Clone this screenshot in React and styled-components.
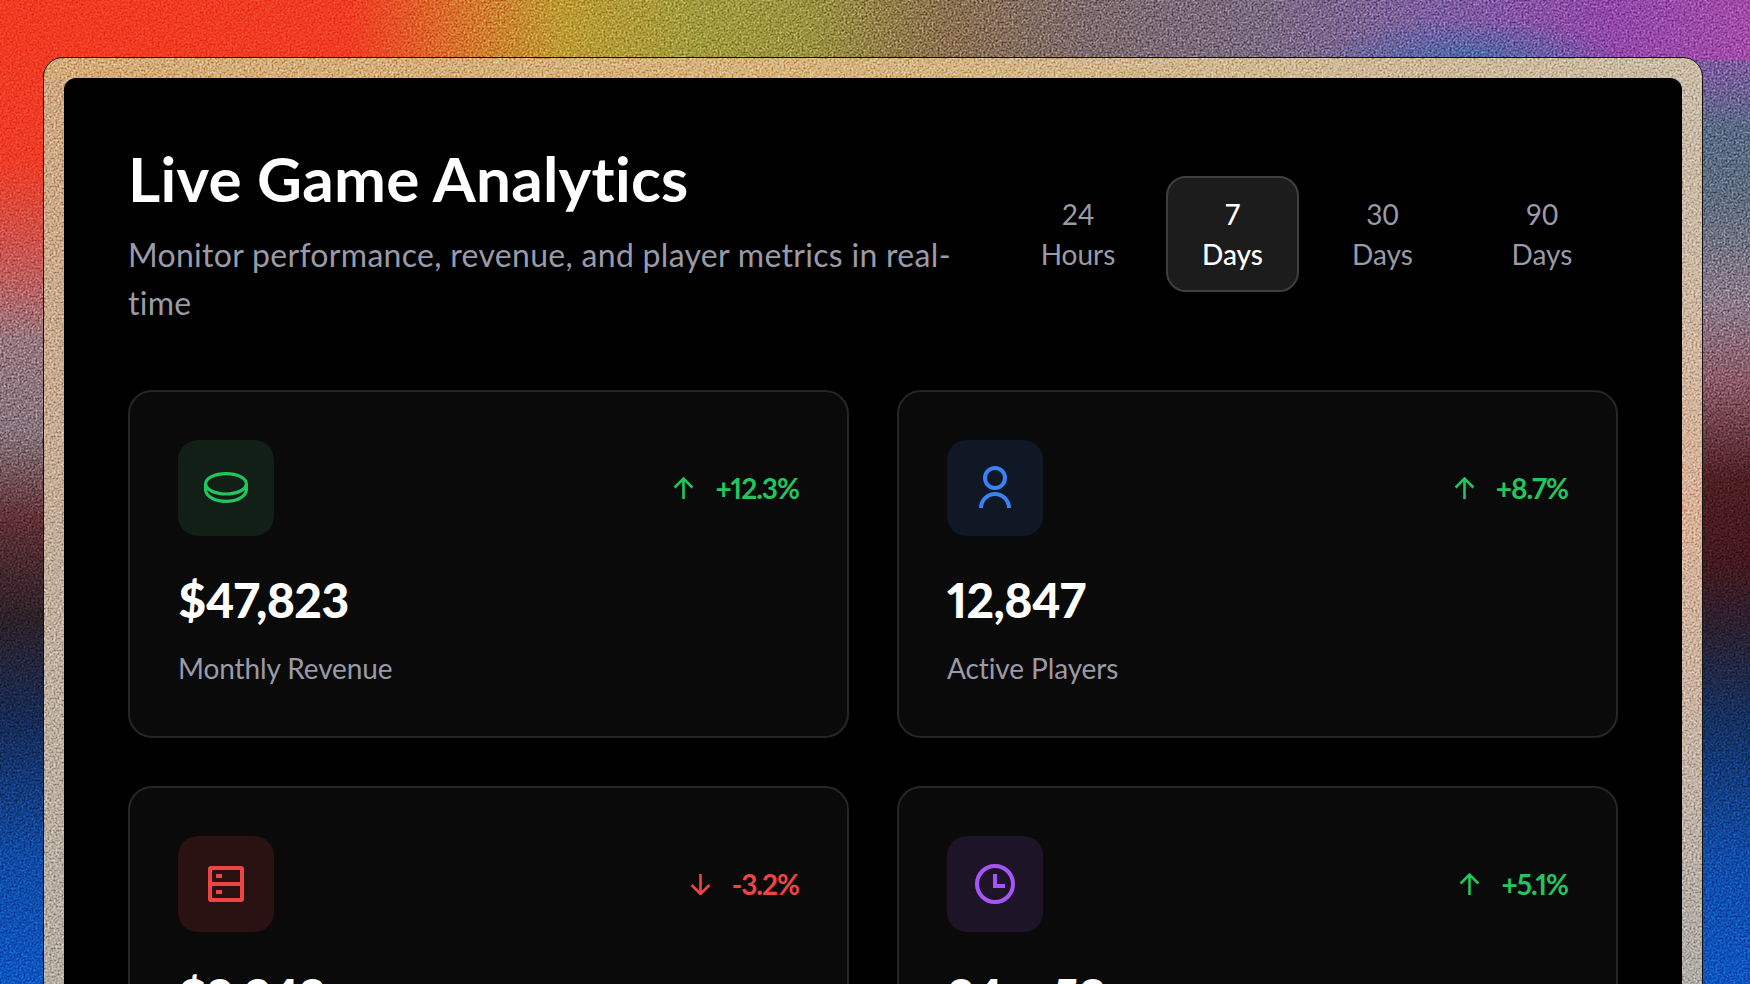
import React from 'react';
import styled, { createGlobalStyle } from 'styled-components';

const noise = `url("data:image/svg+xml,%3Csvg xmlns='http://www.w3.org/2000/svg' width='512' height='512'%3E%3Cfilter id='n' x='0' y='0' width='100%25' height='100%25' color-interpolation-filters='sRGB'%3E%3CfeTurbulence type='fractalNoise' baseFrequency='0.5' numOctaves='2' stitchTiles='stitch'/%3E%3CfeColorMatrix values='1.6 0.8 0.8 0 -1.1 1.6 0.8 0.8 0 -1.1 1.6 0.8 0.8 0 -1.1 0 0 0 0 1'/%3E%3C/filter%3E%3Crect width='512' height='512' filter='url(%23n)'/%3E%3C/svg%3E")`;

const GlobalStyle = createGlobalStyle`
  html, body {
    margin: 0;
    height: 100%;
    overflow: hidden;
    background: #000;
  }
  * {
    box-sizing: border-box;
  }
`;

// Grainy colour wash behind the frame: top band, left side, right side
const Page = styled.div`
  position: relative;
  height: 984px;
  overflow: hidden;
  padding: 57px 47px 0 43px;
  font-family: Lato, "Open Sans", sans-serif;
  font-variant-ligatures: none;
  background-repeat: no-repeat;
  background-image:
    radial-gradient(150px 40px at 1470px 58px, #4c68a4 0%, rgba(76, 104, 164, 0) 100%),
    linear-gradient(90deg, #f23a22 0%, #f03c24 20%, #d8702c 26%, #bd9a34 32%, #a09a3e 40%, #9a9240 46%, #8a7050 54%, #7c6a6c 62%, #7a6a80 72%, #7c5ea0 82%, #9048a8 92%, #a24ca8 100%),
    linear-gradient(180deg, #f03a22 0%, #ee3c26 160px, #c25a58 270px, #96767e 340px, #86747c 430px, #5e3034 520px, #2c2028 620px, #162a54 720px, #0f4aa4 860px, #0d55c0 984px),
    linear-gradient(180deg, #a04aa4 0%, #7a5c9c 70px, #586a84 130px, #5f6c7e 200px, #8a7a88 300px, #8a5a68 380px, #4c1e22 480px, #44181e 560px, #2a2030 630px, #143060 720px, #0f4ca8 860px, #0d55c0 984px);
  background-size: 100% 200px, 100% 60px, 50% 100%, 50% 100%;
  background-position: 0 0, 0 0, 0 0, 100% 0;

  &::before {
    content: '';
    position: absolute;
    inset: 0;
    background-image: ${noise};
    opacity: 0.45;
    mix-blend-mode: overlay;
    pointer-events: none;
  }
`;

const Frame = styled.div`
  position: relative;
  padding: 20px;
  border: 1px solid #111;
  border-radius: 20px;
  background-repeat: repeat, no-repeat, no-repeat, no-repeat;
  background-image:
    ${noise},
    linear-gradient(90deg, #d4ab78, #d6b37c 45%, #cabca6),
    linear-gradient(180deg, #d0a880, #c8ab90 300px, #bfb0a0 600px, #b6ada2 900px),
    linear-gradient(180deg, #c9bca6, #cbb9a4 200px, #d8b196 450px, #c6b4a4 680px, #b0aca8 900px);
  background-size: auto, 100% 22px, 50% 100%, 50% 100%;
  background-position: 0 0, 0 0, 0 0, 100% 0;
  background-blend-mode: soft-light, normal, normal, normal;
`;

const Panel = styled.main`
  background: #000;
  border-radius: 12px;
  padding: 64px;
`;

const Header = styled.header`
  display: flex;
  align-items: center;
  justify-content: space-between;
  gap: 32px;
  margin-bottom: 63px;
`;

const Intro = styled.div`
  width: 840px;
`;

const Title = styled.h1`
  margin: 0 0 17px;
  font-size: 62px;
  line-height: 72px;
  font-weight: 700;
  letter-spacing: 0.25px;
  color: #fff;
`;

const Subtitle = styled.p`
  margin: 0;
  font-size: 32px;
  line-height: 48px;
  letter-spacing: 0.3px;
  color: #9a9aa8;
`;

const Tabs = styled.nav`
  display: flex;
  gap: 16px;
  margin-bottom: 1px;
`;

const Tab = styled.button`
  width: ${(p) => p.$w}px;
  height: 116px;
  padding: 0;
  border-radius: 20px;
  border: 2px solid ${(p) => (p.$active ? '#3f3f42' : 'transparent')};
  background: ${(p) => (p.$active ? '#1c1c1c' : 'transparent')};
  color: ${(p) => (p.$active ? '#fff' : '#9a9aa8')};
  font-family: inherit;
  font-size: 28px;
  line-height: 40px;
  font-weight: ${(p) => (p.$active ? 500 : 400)};
`;

const Grid = styled.section`
  display: grid;
  grid-template-columns: 1fr 1fr;
  gap: 48px;
`;

const Card = styled.article`
  height: 348px;
  padding: 48px;
  border: 2px solid #262628;
  border-radius: 24px;
  background: #0a0a0a;
`;

const CardTop = styled.div`
  display: flex;
  align-items: center;
  justify-content: space-between;
  margin-bottom: 32px;
`;

const IconBox = styled.div`
  display: flex;
  align-items: center;
  justify-content: center;
  width: 96px;
  height: 96px;
  border-radius: 20px;
  background: ${(p) => p.$bg};
  color: ${(p) => p.$color};
`;

const Trend = styled.div`
  display: flex;
  align-items: center;
  gap: 21px;
  font-size: 28px;
  font-weight: 700;
  font-variant-numeric: proportional-nums;
  letter-spacing: -1px;
  color: ${(p) => (p.$down ? '#ef4444' : '#22c55e')};
`;

const Value = styled.div`
  font-size: 48px;
  line-height: 64px;
  font-weight: 900;
  font-variant-numeric: proportional-nums;
  letter-spacing: -0.6px;
  color: #fff;
  margin-bottom: 16px;
`;

const Label = styled.div`
  font-size: 28px;
  line-height: 40px;
  letter-spacing: -0.1px;
  color: #9a9aa8;
`;

const Glyph = ({ children, size = 48 }) => (
  <svg width={size} height={size} viewBox={`0 0 ${size} ${size}`} fill="none" stroke="currentColor" strokeWidth="4">
    {children}
  </svg>
);

const CoinIcon = () => (
  <Glyph>
    <g strokeWidth="3.2">
      <ellipse cx="24" cy="19.8" rx="20.4" ry="10.2" />
      <path d="M3.6 20v5.5c0 6.5 9 11.9 20.4 11.9s20.4-5.4 20.4-11.9V20" />
    </g>
  </Glyph>
);

const UserIcon = () => (
  <Glyph>
    <circle cx="24" cy="14" r="10" />
    <path d="M10 44a14 14 0 0 1 28 0" />
  </Glyph>
);

const ServerIcon = () => (
  <Glyph>
    <rect x="8" y="8" width="32" height="32" rx="1" />
    <path d="M8 24h32" />
    <path d="M14 16h6M14 32h6" />
  </Glyph>
);

const ClockIcon = () => (
  <Glyph>
    <circle cx="24" cy="24" r="18" />
    <path d="M24 14v12h10" />
  </Glyph>
);

const TrendArrow = ({ down }) => (
  <svg width="21" height="22" viewBox="0 0 20 21" fill="none" stroke="currentColor" strokeWidth="2.5">
    <path d={down ? 'M10 1v18.5M1.5 11.5l8.5 8.5 8.5-8.5' : 'M10 21V2M1.5 10L10 1.5 18.5 10'} />
  </svg>
);

const stats = [
  { icon: <CoinIcon />, bg: '#121f17', color: '#22c55e', trend: '+12.3%', value: '$47,823', label: 'Monthly Revenue' },
  { icon: <UserIcon />, bg: '#101826', color: '#3b82f6', trend: '+8.7%', value: '12,847', label: 'Active Players' },
  { icon: <ServerIcon />, bg: '#291211', color: '#ef4444', trend: '-3.2%', down: true, value: '$8,942', label: 'Server Costs' },
  { icon: <ClockIcon />, bg: '#1e1428', color: '#a855f7', trend: '+5.1%', value: '24m 52s', label: 'Avg. Session Time' },
];

const ranges = [
  { top: '24', bottom: 'Hours', w: 144 },
  { top: '7', bottom: 'Days', w: 133, active: true },
  { top: '30', bottom: 'Days', w: 135 },
  { top: '90', bottom: 'Days', w: 152 },
];

const App = () => {
  return (
    <Page>
      <GlobalStyle />
      <Frame>
        <Panel>
          <Header>
            <Intro>
              <Title>Live Game Analytics</Title>
              <Subtitle>Monitor performance, revenue, and player metrics in real-time</Subtitle>
            </Intro>
            <Tabs>
              {ranges.map((r) => (
                <Tab key={r.top} $w={r.w} $active={r.active}>
                  {r.top}
                  <br />
                  {r.bottom}
                </Tab>
              ))}
            </Tabs>
          </Header>
          <Grid>
            {stats.map((s) => (
              <Card key={s.label}>
                <CardTop>
                  <IconBox $bg={s.bg} $color={s.color}>{s.icon}</IconBox>
                  <Trend $down={s.down}>
                    <TrendArrow down={s.down} />
                    {s.trend}
                  </Trend>
                </CardTop>
                <Value>{s.value}</Value>
                <Label>{s.label}</Label>
              </Card>
            ))}
          </Grid>
        </Panel>
      </Frame>
    </Page>
  );
};

export default App;
